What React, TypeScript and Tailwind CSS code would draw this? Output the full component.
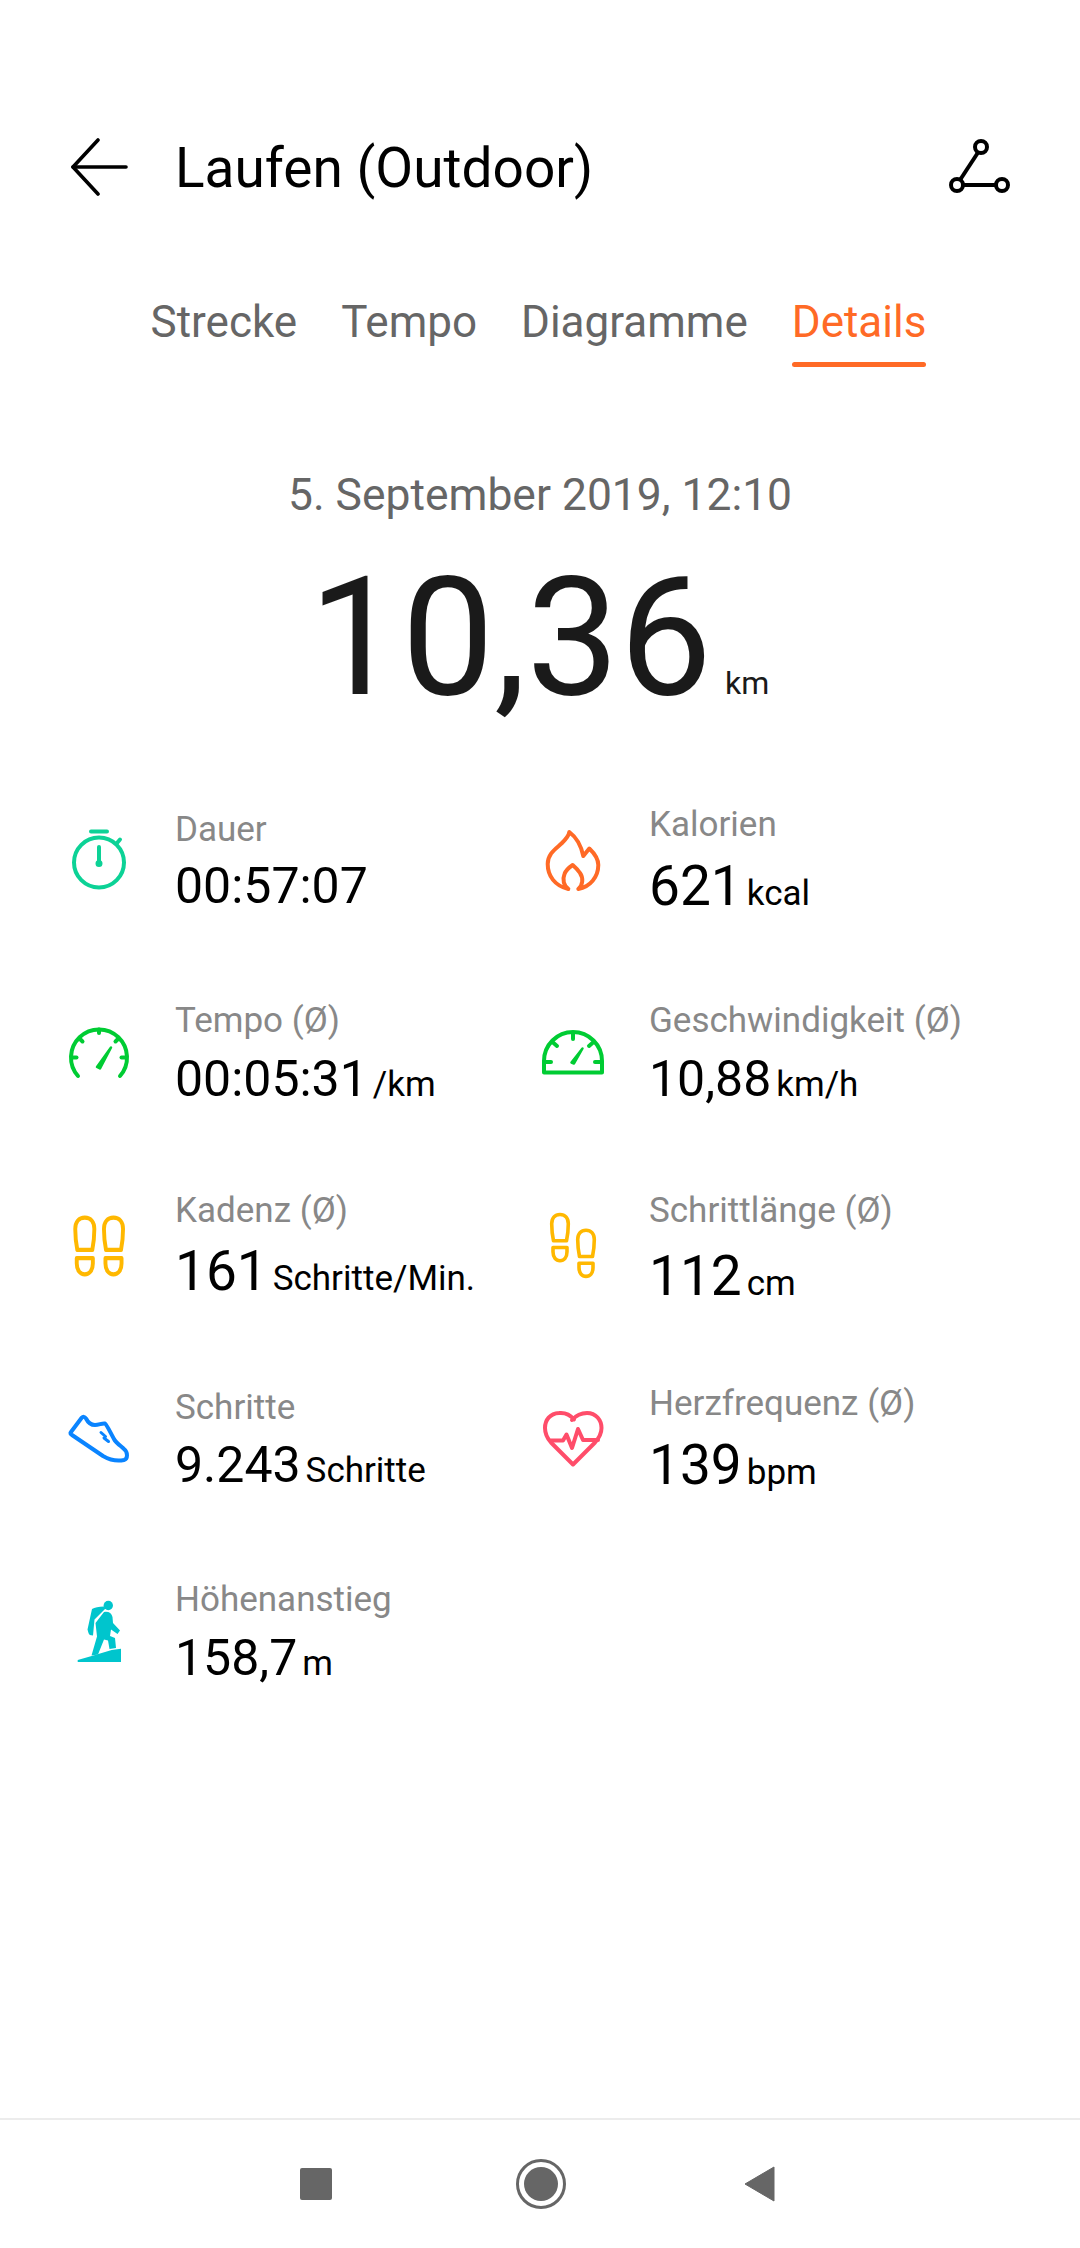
const tabs = ["Strecke", "Tempo", "Diagramme"];

function Foot({ x, y, sx = 1, sy = 1, flip = false }: { x: number; y: number; sx?: number; sy?: number; flip?: boolean }) {
  return (
    <g transform={`translate(${x} ${y}) scale(${flip ? -sx : sx} ${sy})`}>
      <path d="M3.5 28 C2.2 22 1.7 17 1.7 11 C1.7 5 5 1.7 10 1.7 C15 1.7 18.3 5 18.3 11 C18.3 17 17.8 22 16.5 28 Z" />
      <path d="M3 34.7 H17 V39 C17 44.5 14 47.9 10 47.9 C6 47.9 3 44.5 3 39 Z" />
    </g>
  );
}

function Icon({ children, color }: { children: React.ReactNode; color: string }) {
  return (
    <svg
      viewBox="0 0 80 80"
      className="w-20 h-20 shrink-0"
      fill="none"
      stroke={color}
      strokeWidth={4}
      strokeLinecap="round"
      strokeLinejoin="round"
    >
      {children}
    </svg>
  );
}

const stopwatch = (
  <Icon color="#0cd296">
    <circle cx="40" cy="42.5" r="25" />
    <path d="M32 11.5 H48" />
    <path d="M40 27 V43" />
    <circle cx="40" cy="43.5" r="1.5" strokeWidth={4} />
    <path d="M58 23 L61 19.5" />
  </Icon>
);

const gaugeOpen = (
  <Icon color="#00cc33">
    <path d="M19 63 A28 28 0 1 1 61 63" />
    <path d="M40 16.5 V20" />
    <path d="M13 44.5 H17.5" />
    <path d="M62.5 44.5 H67" />
    <path d="M21 26 L23.5 28.5" />
    <path d="M59 26 L56.5 28.5" />
    <path d="M38 54 L52 34.5 L41 55.5 Z" fill="#00cc33" strokeWidth={2.5} />
  </Icon>
);

const flame = (
  <Icon color="#ff6a26">
    <path d="M35.3 69 C22 66 14.7 56 14.7 44 C14.7 33 24 28 29 23 C33 19 36 15 36.3 12 C43 17 48 25 50.3 36 L56.3 28.5 C61 33 65.3 38 65.3 45 C65.3 57 57 67 45.3 69 C50 65 50.5 58 47 53 C45 50 42 47 39.7 45 C36 47.5 33 50 31.5 54 C29 60 31 66 35.3 69 Z" />
  </Icon>
);

const gaugeClosed = (
  <Icon color="#00cc33">
    <path d="M11 59.5 V48 A29 29 0 0 1 69 48 V59.5 Z" />
    <path d="M40 21 V26" />
    <path d="M13 49 H18" />
    <path d="M62 49 H67" />
    <path d="M20 29.5 L24 33" />
    <path d="M60 29.5 L56 33" />
    <path d="M38.5 49.5 L49.5 35.5 L41 50.5 Z" fill="#00cc33" strokeWidth={2.5} />
  </Icon>
);

const feetPair = (
  <Icon color="#ffb800">
    <g strokeWidth={3.4}>
      <Foot x={14.3} y={9.5} sx={1.15} sy={1.23} />
      <Foot x={66} y={9.5} sx={1.15} sy={1.23} flip />
    </g>
  </Icon>
);

const feetSteps = (
  <Icon color="#ffb800">
    <g strokeWidth={3.6}>
      <Foot x={17} y={6.8} />
      <Foot x={43} y={22.5} />
    </g>
  </Icon>
);

const shoe = (
  <Icon color="#0a84ff">
    <path d="M12 33 L22.5 19 Q25 16.5 27 19.5 C29 23.5 32 26 36 26 C40 26 43 24 46 24.5 C48 26 51 33 55 40 C57 44 62 47 65 50 C69 53 69 60 65 61 C58 62.5 50 60.5 44 57 L13 36 Q10.5 34.5 12 33 Z" />
    <path d="M42 33.5 L46.5 37.5" strokeWidth={3} />
    <path d="M45 39 L49.5 42.5" strokeWidth={3} />
  </Icon>
);

const heart = (
  <Icon color="#ff4d6a">
    <path d="M41 20.5 C37 15.5 31 13.5 26 14 C17 14.5 12 21 12 29 C12 34 14 39 18 43.5 L40 65.5 L62 43.5 C66 39 68.5 34 68.5 29 C68.5 21 63 14 54 14 C49 14 43.5 16 39 21" />
    <path d="M18 41.5 H30 L33.5 35.5 L39 49 L45 30 L50 41 H65" />
  </Icon>
);

const hiker = (
  <Icon color="#00c5cd">
    <g fill="#00c5cd" stroke="none">
      <circle cx="49.3" cy="13.5" r="4.7" />
      <path d="M33 17 Q37 14.5 45 14.5 L46.5 16.5 L35.5 27.5 L34 43.5 Q30 43.5 29.5 41 L28.5 37.5 Z" />
      <path d="M45 20 Q52 19 53.5 25 L54 31 L61 38.5 L58.5 42 L52 37.5 L51 44 L56 46 L57 56 L50.5 57 L49 48.5 L45 47.5 L39 62.5 L32.5 63.5 L38 44.5 L36.5 31 Z" />
      <path d="M18.7 68 L32.7 64 L52.7 58 L62 56.8 V70 H18.7 Z" />
    </g>
  </Icon>
);

const rows = [
  [
    { icon: stopwatch, label: "Dauer", value: "00:57:07", unit: "", size: "text-[50px]", top: "pt-[47px]", gap: "mb-[8px]" },
    { icon: flame, label: "Kalorien", value: "621", unit: "kcal", size: "text-[55px]", top: "pt-[42px]", gap: "mb-[13px]" },
  ],
  [
    { icon: gaugeOpen, label: "Tempo (Ø)", value: "00:05:31", unit: "/km", size: "text-[50px]", top: "pt-[45px]", gap: "mb-[10px]" },
    { icon: gaugeClosed, label: "Geschwindigkeit (Ø)", value: "10,88", unit: "km/h", size: "text-[50px]", top: "pt-[45px]", gap: "mb-[10px]" },
  ],
  [
    { icon: feetPair, label: "Kadenz (Ø)", value: "161", unit: "Schritte/Min.", size: "text-[55px]", top: "pt-[42px]", gap: "mb-[12px]" },
    { icon: feetSteps, label: "Schrittlänge (Ø)", value: "112", unit: "cm", size: "text-[55px]", top: "pt-[42px]", gap: "mb-[17px]" },
  ],
  [
    { icon: shoe, label: "Schritte", value: "9.243", unit: "Schritte", size: "text-[50px]", top: "pt-[46px]", gap: "mb-[9px]" },
    { icon: heart, label: "Herzfrequenz (Ø)", value: "139", unit: "bpm", size: "text-[55px]", top: "pt-[42px]", gap: "mb-[13px]" },
  ],
  [{ icon: hiker, label: "Höhenanstieg", value: "158,7", unit: "m", size: "text-[50px]", top: "pt-[45px]", gap: "mb-[10px]" }],
];

export default function App() {
  return (
    <div className="w-[1080px] min-h-[2248px] bg-white flex flex-col font-['Roboto',sans-serif]">
      {/* header */}
      <div className="flex items-center pl-[70px] pr-[68px] pt-[136px] h-[197px]">
        <svg viewBox="0 0 58 58" className="w-[58px] h-[58px] shrink-0" fill="none" stroke="#000" strokeWidth={3.6} strokeLinecap="round" strokeLinejoin="round">
          <path d="M28 2 L3 29 L28 56" />
          <path d="M3 29 H56" />
        </svg>
        <h1 className="ml-[47px] mt-[2px] text-[55px] leading-[60px] text-black font-normal">Laufen (Outdoor)</h1>
        <svg viewBox="0 0 64 56" className="ml-auto w-16 h-14 shrink-0" fill="none" stroke="#000" strokeWidth={4}>
          <circle cx="33" cy="8" r="6" />
          <circle cx="9" cy="46" r="6" />
          <circle cx="54" cy="46" r="6" />
          <path d="M30 13.5 L12 41" />
          <path d="M15 46 H48" />
        </svg>
      </div>

      {/* tabs */}
      <div className="flex justify-center gap-[44px] mt-[99px] pr-[3px] text-[44px] leading-[52px] text-[#666666]">
        {tabs.map((t) => (
          <span key={t}>{t}</span>
        ))}
        <span className="relative text-[#ff6a26]">
          Details
          <span className="absolute left-0 right-0 top-[66px] h-[5px] rounded-full bg-[#ff6a26]" />
        </span>
      </div>

      {/* summary */}
      <p className="mt-[121px] text-center text-[44.4px] leading-[52px] text-[#666666]">5. September 2019, 12:10</p>
      <div className="mt-[45px] pr-[2px] flex justify-center items-baseline h-[144px]">
        <span className="text-[165px] leading-[144px] text-[#1a1a1a]">10,36</span>
        <span className="ml-[13px] text-[32px] leading-[40px] text-[#1a1a1a]">km</span>
      </div>

      {/* stats */}
      <div className="mt-[53px]">
        {rows.map((row, i) => (
          <div key={i} className="grid grid-cols-[474px_1fr] pl-[59px] h-[193px]">
            {row.map((c) => (
              <div key={c.label} className="flex">
                <div className="h-[193px] flex items-center">{c.icon}</div>
                <div className={`ml-[36px] ${c.top}`}>
                  <p className={`text-[35px] leading-[40px] text-[#888888] ${c.gap}`}>{c.label}</p>
                  <p className="leading-[56px] text-black whitespace-nowrap">
                    <span className={c.size}>{c.value}</span>
                    {c.unit && <span className="ml-[5px] text-[35px]">{c.unit}</span>}
                  </p>
                </div>
              </div>
            ))}
          </div>
        ))}
      </div>

      {/* nav bar */}
      <div className="mt-auto h-[130px] border-t-2 border-[#ececec] flex items-center justify-center">
        <div className="flex items-center gap-[184px] mt-[-1px] pr-[6px]">
          <div className="w-8 h-8 rounded-[2px] bg-[#666666]" />
          <svg viewBox="0 0 50 50" className="w-[50px] h-[50px]">
            <circle cx="25" cy="25" r="23.5" fill="none" stroke="#666666" strokeWidth={3} />
            <circle cx="25" cy="25" r="17" fill="#666666" />
          </svg>
          <svg viewBox="0 0 32 36" className="w-8 h-9 ml-[-7px]">
            <path d="M2 18 L31 1 V35 Z" fill="#666666" stroke="#666666" strokeWidth={1} strokeLinejoin="round" />
          </svg>
        </div>
      </div>
    </div>
  );
}
